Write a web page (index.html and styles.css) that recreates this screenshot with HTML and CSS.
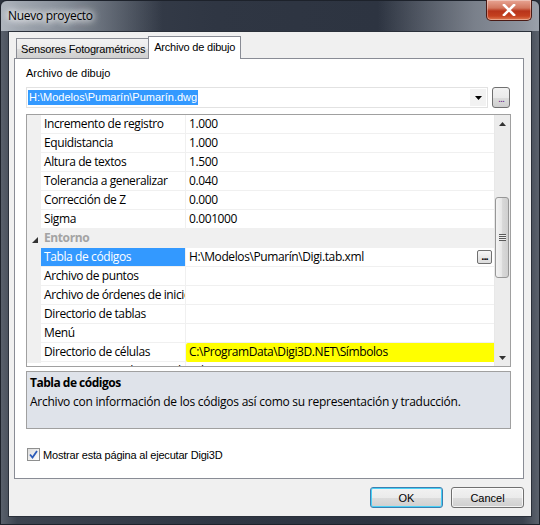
FILE: index.html
```html
<!DOCTYPE html>
<html lang="es">
<head>
<meta charset="utf-8">
<title>Nuevo proyecto</title>
<link rel="stylesheet" href="styles.css">
</head>
<body>
<div class="window">
  <div class="titlebar">
    <span class="title">Nuevo proyecto</span>
    <div class="close">
      <svg width="14" height="12" viewBox="0 0 14 12"><path d="M2 1 L12 11 M12 1 L2 11" stroke="#fff" stroke-width="2.6" stroke-linecap="square" fill="none"/></svg>
    </div>
  </div>
  <div class="client">
    <div class="tabs-area">
      <div class="tabstrip">
        <div class="tab">Sensores Fotogramétricos</div>
        <div class="tab active">Archivo de dibujo</div>
      </div>
      <div class="panel">
        <div class="label">Archivo de dibujo</div>
        <div class="combo-row">
          <div class="combo">
            <span class="sel">H:\Modelos\Pumarín\Pumarín.dwg</span>
            <span class="arrow"><svg width="7" height="4" viewBox="0 0 7 4"><path d="M0 0 H7 L3.5 4 Z" fill="#000"/></svg></span>
          </div>
          <div class="dots-btn">...</div>
        </div>
        <div class="grid">
          <div class="rows">
            <div class="row"><div class="gut"></div><div class="name">Incremento de registro</div><div class="val">1.000</div></div>
            <div class="row"><div class="gut"></div><div class="name">Equidistancia</div><div class="val">1.000</div></div>
            <div class="row"><div class="gut"></div><div class="name">Altura de textos</div><div class="val">1.500</div></div>
            <div class="row"><div class="gut"></div><div class="name">Tolerancia a generalizar</div><div class="val">0.040</div></div>
            <div class="row"><div class="gut"></div><div class="name">Corrección de Z</div><div class="val">0.000</div></div>
            <div class="row"><div class="gut"></div><div class="name">Sigma</div><div class="val">0.001000</div></div>
            <div class="row cat"><div class="gut"><svg width="6" height="6" viewBox="0 0 6 6"><path d="M6 0 V6 H0 Z" fill="#333"/></svg></div><div class="catname">Entorno</div></div>
            <div class="row"><div class="gut"></div><div class="name selected">Tabla de códigos</div><div class="val">H:\Modelos\Pumarín\Digi.tab.xml<span class="cell-btn">...</span></div></div>
            <div class="row"><div class="gut"></div><div class="name">Archivo de puntos</div><div class="val"></div></div>
            <div class="row"><div class="gut"></div><div class="name">Archivo de órdenes de inicio</div><div class="val"></div></div>
            <div class="row"><div class="gut"></div><div class="name">Directorio de tablas</div><div class="val"></div></div>
            <div class="row"><div class="gut"></div><div class="name">Menú</div><div class="val"></div></div>
            <div class="row"><div class="gut"></div><div class="name">Directorio de células</div><div class="val"><span class="marker">C:\ProgramData\Digi3D.NET\Símbolos</span></div></div>
            <div class="row partial"><div class="gut"></div><div class="name">Generar copias de seguridad</div><div class="val">Falso</div></div>
          </div>
          <div class="vscroll">
            <div class="sarrow"><svg width="7" height="4" viewBox="0 0 7 4"><path d="M0 4 H7 L3.5 0 Z" fill="#333"/></svg></div>
            <div class="strack">
              <div class="thumb"><span class="grip"></span></div>
            </div>
            <div class="sarrow"><svg width="7" height="4" viewBox="0 0 7 4"><path d="M0 0 H7 L3.5 4 Z" fill="#333"/></svg></div>
          </div>
        </div>
        <div class="help">
          <div class="help-title">Tabla de códigos</div>
          <div class="help-text">Archivo con información de los códigos así como su representación y traducción.</div>
        </div>
        <label class="check">
          <span class="box"><svg width="9" height="9" viewBox="0 0 9 9"><path d="M1 4.5 L3.5 7.5 L8 1" stroke="#2a5ab8" stroke-width="1.8" fill="none"/></svg></span>
          Mostrar esta página al ejecutar Digi3D
        </label>
      </div>
    </div>
    <div class="buttons">
      <div class="btn default">OK</div>
      <div class="btn">Cancel</div>
    </div>
  </div>
</div>
</body>
</html>
```

FILE: styles.css
```css
* { box-sizing: border-box; }
html, body { margin: 0; padding: 0; }
body { width: 540px; height: 525px; overflow: hidden; background: #2c333e; }

.window {
  width: 540px;
  height: 525px;
  display: flex;
  flex-direction: column;
  background: linear-gradient(90deg, #59606b 0%, #3c434f 3%, #2f3643 40%, #2d3441 70%, #3b424e 97%, #5b626d 100%);
  border-radius: 6px 6px 0 0;
  border: 1px solid #1d222b;
}

.titlebar {
  height: 30px;
  flex: none;
  position: relative;
  display: flex;
  align-items: center;
  padding-left: 7px;
  background: linear-gradient(90deg, rgba(190,196,204,0.85) 0%, rgba(160,168,178,0.75) 12%, rgba(60,68,80,0.0) 30%, rgba(0,0,0,0) 70%, rgba(150,156,166,0.7) 88%, rgba(170,176,186,0.8) 100%);
  border-radius: 6px 6px 0 0;
}
.title {
  font-family: "Open Sans", "Noto Sans", sans-serif;
  font-size: 12px;
  letter-spacing: -0.3px;
  color: #000;
  text-shadow: 0 0 6px #fff, 0 0 8px #fff, 0 0 10px rgba(255,255,255,0.9);
  margin-top: -1px;
}
.close {
  position: absolute;
  right: 7px;
  top: -1px;
  width: 46px;
  height: 21px;
  border: 1px solid #4a1a14;
  border-top: none;
  border-radius: 0 0 5px 5px;
  background: linear-gradient(180deg, #e8a594 0%, #d2775f 40%, #b8341a 55%, #c4401f 80%, #e07a52 100%);
  box-shadow: inset 0 0 0 1px rgba(255,255,255,0.35);
  display: flex;
  align-items: center;
  justify-content: center;
}

.client {
  flex: 1;
  margin: 0 7px 7px 7px;
  background: #f0f0f0;
  border: 1px solid #2a303a;
  display: flex;
  flex-direction: column;
  font-family: "Liberation Sans", Arial, sans-serif;
  font-size: 11px;
  color: #000;
}

.tabs-area {
  padding: 4px 7px 0 5px;
}
.tabstrip {
  display: flex;
  height: 22px;
  align-items: flex-end;
  padding-left: 2px;
}
.tab {
  height: 20px;
  padding: 0 3px 0 4px;
  display: flex;
  align-items: center;
  border: 1px solid #898c95;
  border-bottom: none;
  background: linear-gradient(180deg, #f2f2f2 0%, #ebebeb 50%, #dddddd 51%, #cfcfcf 100%);
  font-family: "Liberation Sans", Arial, sans-serif;
  font-size: 11px;
  letter-spacing: -0.2px;
  margin-right: -1px;
}
.tab.active {
  height: 23px;
  background: #fff;
  margin-bottom: -1px;
  position: relative;
  z-index: 1;
  padding: 0 5px 2px 5px;
}

.panel {
  height: 421px;
  background: #fff;
  border: 1px solid #898c95;
  padding: 5px 12px 0 11px;
  display: flex;
  flex-direction: column;
}
.label {
  font-family: "Liberation Sans", Arial, sans-serif;
  font-size: 11px;
  height: 17px;
  line-height: 17px;
  margin-top: 1px;
}
.combo-row {
  display: flex;
  align-items: center;
  margin-top: 5px;
  height: 21px;
}
.combo {
  width: 462px;
  height: 21px;
  border: 1px solid #e2e2e2;
  background: #fff;
  display: flex;
  align-items: center;
  padding-left: 1px;
  font-family: "Liberation Sans", Arial, sans-serif;
  font-size: 11px;
  position: relative;
}
.sel {
  background: #3399ff;
  color: #fff;
  padding: 0 1px;
  line-height: 15px;
}
.arrow {
  position: absolute;
  right: 1px;
  top: 1px;
  width: 16px;
  height: 17px;
  display: flex;
  align-items: center;
  justify-content: center;
  background: #f2f2f2;
}
.dots-btn {
  margin-left: 4px;
  width: 18px;
  height: 21px;
  border: 1px solid #707070;
  border-radius: 3px;
  background: linear-gradient(180deg, #f2f2f2 0%, #ebebeb 50%, #dddddd 51%, #cfcfcf 100%);
  font-size: 11px;
  line-height: 20px;
  text-align: center;
  color: #6a2a8a;
  letter-spacing: -1px;
}

.grid {
  margin-top: 6px;
  height: 253px;
  border: 1px solid #a0a0a0;
  display: flex;
  overflow: hidden;
  font-family: "Open Sans", "Noto Sans", sans-serif;
  font-size: 12px;
  letter-spacing: -0.4px;
}
.rows {
  flex: 1;
  display: flex;
  flex-direction: column;
  overflow: hidden;
}
.row {
  display: flex;
  height: 19px;
  flex: none;
}
.row.partial { height: 4px; overflow: hidden; align-items: flex-start; }
.row.partial .name, .row.partial .val { height: 19px; flex-shrink: 0; }
.gut {
  width: 14px;
  flex: none;
  background: #f0f0f0;
  display: flex;
  align-items: center;
  justify-content: center;
  padding-top: 1px;
}
.name {
  width: 145px;
  flex: none;
  padding-left: 3px;
  line-height: 18px;
  border-bottom: 1px solid #f0f0f0;
  border-right: 1px solid #f0f0f0;
  white-space: nowrap;
  overflow: hidden;
}
.name.selected {
  background: #3399ff;
  color: #fff;
}
.val {
  flex: 1;
  padding-left: 3px;
  line-height: 18px;
  border-bottom: 1px solid #f0f0f0;
  white-space: nowrap;
  position: relative;
}
.cell-btn {
  position: absolute;
  right: 2px;
  top: 2px;
  width: 15px;
  height: 14px;
  border: 1px solid #707070;
  border-radius: 2px;
  background: linear-gradient(180deg, #f6f6f6, #dcdcdc);
  font-size: 11px;
  font-weight: bold;
  line-height: 10px;
  text-align: center;
  letter-spacing: -1px;
}
.marker {
  position: absolute;
  left: 0;
  right: -2px;
  top: 0;
  bottom: -1px;
  padding-left: 3px;
  background: #ffff00;
  border-radius: 2px 0 0 2px;
}
.row.cat {
  background: #f0f0f0;
}
.row.cat .gut { justify-content: flex-start; padding-left: 5px; padding-top: 3px; }
.catname {
  padding-left: 3px;
  line-height: 18px;
  color: #a3a3a3;
  font-weight: bold;
}

.vscroll {
  width: 16px;
  flex: none;
  background: #ececec;
  border-left: 1px solid #e8e8e8;
  display: flex;
  flex-direction: column;
}
.sarrow {
  height: 17px;
  display: flex;
  align-items: center;
  justify-content: center;
}
.strack {
  flex: 1;
  position: relative;
}
.thumb {
  position: absolute;
  left: 0;
  right: 1px;
  top: 65px;
  height: 81px;
  border: 1px solid #979797;
  border-radius: 3px;
  background: linear-gradient(90deg, #f3f3f3 0%, #e8e8e8 45%, #d8d8d8 55%, #cfcfcf 100%);
  display: flex;
  align-items: center;
  justify-content: center;
}
.grip {
  width: 7px;
  height: 7px;
  background: repeating-linear-gradient(180deg, #5a5a5a 0 1px, #eeeeee 1px 2px);
}

.help {
  margin-top: 4px;
  height: 58px;
  border: 1px solid #a0a0a0;
  background: #dfe3ea;
  padding: 2px 0 0 3px;
  font-family: "Open Sans", "Noto Sans", sans-serif;
  font-size: 12px;
  letter-spacing: -0.25px;
}
.help-title {
  font-weight: bold;
  line-height: 18px;
  letter-spacing: -0.5px;
}
.help-text {
  line-height: 19px;
}

.check {
  margin-top: 19px;
  display: flex;
  align-items: center;
  font-family: "Liberation Sans", Arial, sans-serif;
  font-size: 11px;
  letter-spacing: -0.2px;
  height: 13px;
}
.box {
  width: 13px;
  height: 13px;
  border: 1px solid #8e8f8f;
  background: linear-gradient(135deg, #dcdcdc, #fdfdfd);
  margin: 0 3px 0 1px;
  display: flex;
  align-items: center;
  justify-content: center;
}

.buttons {
  display: flex;
  justify-content: flex-end;
  gap: 8px;
  padding: 8px 7px 0 0;
}
.btn {
  width: 73px;
  height: 21px;
  border: 1px solid #707070;
  border-radius: 3px;
  background: linear-gradient(180deg, #f2f2f2 0%, #ebebeb 50%, #dddddd 51%, #cfcfcf 100%);
  font-family: "Liberation Sans", Arial, sans-serif;
  font-size: 11px;
  display: flex;
  align-items: center;
  justify-content: center;
  box-shadow: inset 0 0 0 1px rgba(255,255,255,0.7);
}
.btn.default {
  border-color: #3c7fb1;
  box-shadow: inset 0 0 0 1px #48d0f6;
  background: linear-gradient(180deg, #f2f2f2 0%, #ebebeb 50%, #dddddd 51%, #cfcfcf 100%);
}
```
